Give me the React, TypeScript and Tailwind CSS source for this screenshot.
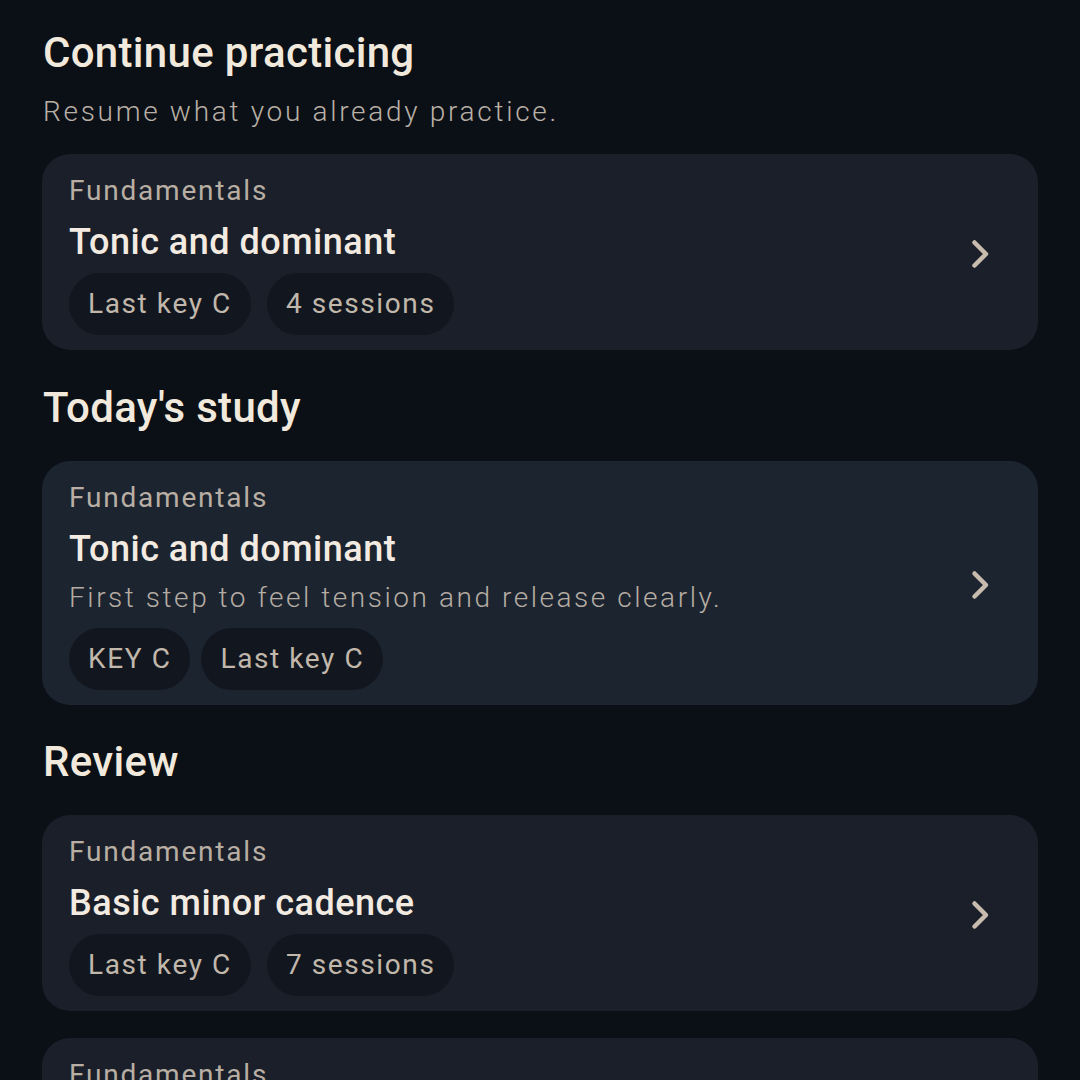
const font = { fontFamily: "Roboto, 'Noto Sans', sans-serif" };

type Card = {
  category: string;
  title: string;
  description?: string;
  chips: string[];
  highlight?: boolean;
};

function Chevron() {
  return (
    <svg width="22" height="32" viewBox="0 0 22 32" fill="none" className="shrink-0">
      <polyline
        points="4.5,4.5 16,16 4.5,27.5"
        stroke="#c8bcaf"
        strokeWidth="4.5"
        strokeLinecap="round"
        strokeLinejoin="round"
      />
    </svg>
  );
}

function StudyCard({ card, className = "" }: { card: Card; className?: string }) {
  return (
    <div
      className={`flex items-center rounded-[28px] pl-[27px] pr-[46px] pt-[19px] pb-[15px] ${
        card.highlight ? "bg-[#1c2430]" : "bg-[#1a1f29]"
      } ${className}`}
    >
      <div className="flex-1 min-w-0">
        <div className="text-[28px] leading-[36px] tracking-[1.8px] text-[#b8aea3]">{card.category}</div>
        <div className="mt-[11px] text-[36px] leading-[44px] font-medium tracking-[0.5px] text-[#f3ebe1]">
          {card.title}
        </div>
        {card.description && (
          <div className="mt-[9px] text-[28px] leading-[36px] font-light tracking-[2.55px] text-[#b5aca2]">
            {card.description}
          </div>
        )}
        <div className={`flex ${card.description ? "mt-[12px] gap-[11px]" : "mt-[9px] gap-[16px]"}`}>
          {card.chips.map((c) => (
            <span
              key={c}
              className="flex h-[62px] items-center rounded-full bg-[#12171f] px-[19px] text-[28px] leading-[36px] tracking-[1.6px] text-[#c1b7ab]"
            >
              {c}
            </span>
          ))}
        </div>
      </div>
      <Chevron />
    </div>
  );
}

function SectionTitle({ children, className = "" }: { children: React.ReactNode; className?: string }) {
  return (
    <h2 className={`text-[42px] leading-[52px] font-medium tracking-[0.3px] text-[#f2e9dd] ${className}`}>
      {children}
    </h2>
  );
}

export default function App() {
  return (
    <div style={font} className="h-[1080px] w-[1080px] overflow-hidden bg-[#0b0f16] px-[42px] pt-[27px]">
      <SectionTitle className="pl-px">Continue practicing</SectionTitle>
      <p className="mt-[15px] pl-px text-[28px] leading-[36px] font-light tracking-[2.7px] text-[#b9b0a6]">
        Resume what you already practice.
      </p>
      <StudyCard
        className="mt-[24px]"
        card={{ category: "Fundamentals", title: "Tonic and dominant", chips: ["Last key C", "4 sessions"] }}
      />

      <SectionTitle className="mt-[32px] pl-px">Today's study</SectionTitle>
      <StudyCard
        className="mt-[27px]"
        card={{
          category: "Fundamentals",
          title: "Tonic and dominant",
          description: "First step to feel tension and release clearly.",
          chips: ["KEY C", "Last key C"],
          highlight: true,
        }}
      />

      <SectionTitle className="mt-[31px] pl-px">Review</SectionTitle>
      <div className="mt-[27px] flex flex-col gap-[27px]">
        <StudyCard
          card={{ category: "Fundamentals", title: "Basic minor cadence", chips: ["Last key C", "7 sessions"] }}
        />
        <StudyCard
          card={{ category: "Fundamentals", title: "Dominant seventh", chips: ["Last key G", "2 sessions"] }}
        />
      </div>
    </div>
  );
}
